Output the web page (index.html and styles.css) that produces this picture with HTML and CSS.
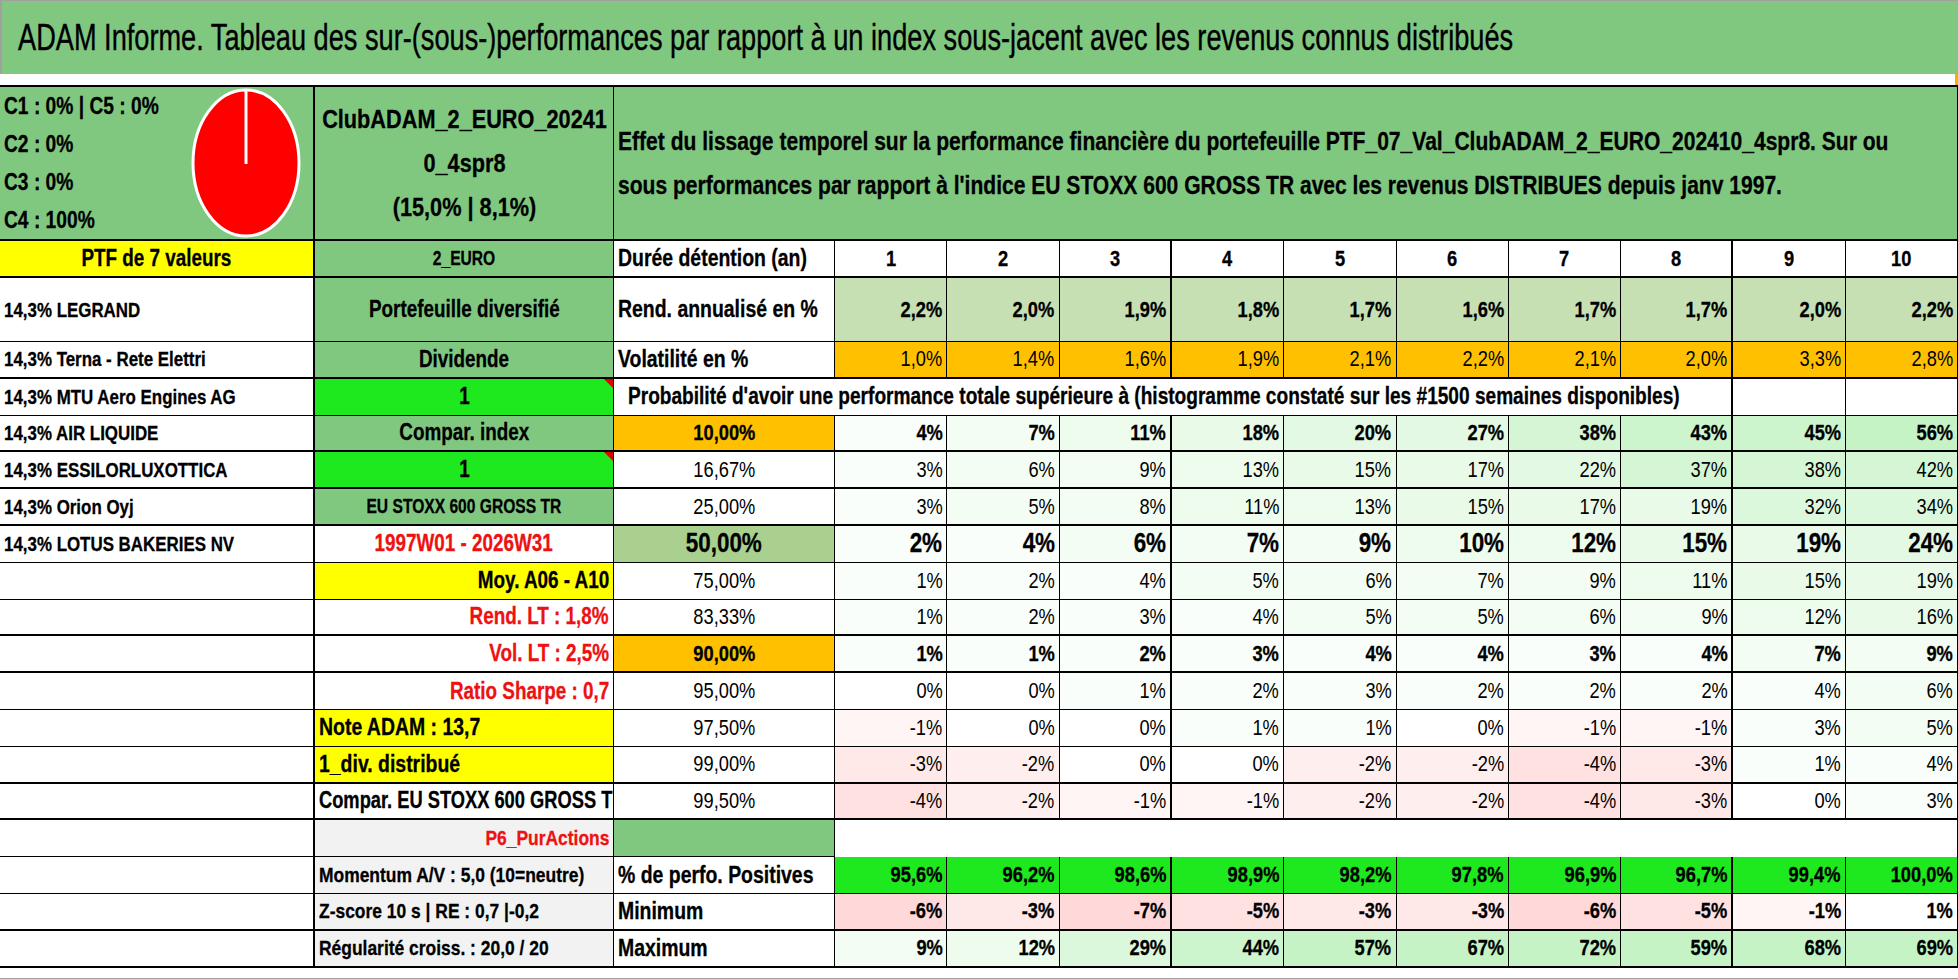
FILE: index.html
```html
<!DOCTYPE html>
<html lang="fr">
<head>
<meta charset="utf-8">
<title>ADAM Informe</title>
<link rel="stylesheet" href="styles.css">
</head>
<body>
<div class="sheet">
  <div class="title"><span>ADAM Informe. Tableau des sur-(sous-)performances par rapport à un index sous-jacent avec les revenus connus distribués</span></div>
  <div class="gap"></div>
  <div class="grid">
    <!-- row 1 -->
    <div class="c gr tr tb piecell">
      <span class="legend">C1 : 0% | C5 : 0%<br>C2 : 0%<br>C3 : 0%<br>C4 : 100%</span>
      <svg class="pie" viewBox="0 0 110 150" width="110" height="150" preserveAspectRatio="none">
        <ellipse cx="55" cy="75" rx="53" ry="73" fill="#ff0000" stroke="#ffffff" stroke-width="3"/>
        <line x1="55" y1="3" x2="55" y2="76" stroke="#ffffff" stroke-width="3"/>
      </svg>
    </div>
    <div class="c gr ctr tb club"><span>ClubADAM_2_EURO_20241<br>0_4spr8<br>(15,0% | 8,1%)</span></div>
    <div class="c gr tb effet span11"><span>Effet du lissage temporel sur la performance financière du portefeuille PTF_07_Val_ClubADAM_2_EURO_202410_4spr8. Sur ou<br>sous performances par rapport à l'indice EU STOXX 600 GROSS TR avec les revenus DISTRIBUES depuis janv 1997.</span></div>

    <!-- row 2 -->
    <div class="c ye ctr tr tb"><span>PTF de 7 valeurs</span></div>
    <div class="c gr ctr tb small"><span>2_EURO</span></div>
    <div class="c lab tb"><span>Durée détention (an)</span></div>
    <div class="c v ctr tb"><span>1</span></div><div class="c v ctr tb"><span>2</span></div><div class="c v ctr tb tr"><span>3</span></div><div class="c v ctr tb"><span>4</span></div><div class="c v ctr tb"><span>5</span></div><div class="c v ctr tb"><span>6</span></div><div class="c v ctr tb"><span>7</span></div><div class="c v ctr tb tr"><span>8</span></div><div class="c v ctr tb"><span>9</span></div><div class="c v ctr tb"><span>10</span></div>

    <!-- row 3 -->
    <div class="c ca tr"><span>14,3% LEGRAND</span></div>
    <div class="c gr ctr"><span>Portefeuille diversifié</span></div>
    <div class="c lab"><span>Rend. annualisé en %</span></div>
    <div class="c v r lg"><span>2,2%</span></div><div class="c v r lg"><span>2,0%</span></div><div class="c v r lg tr"><span>1,9%</span></div><div class="c v r lg"><span>1,8%</span></div><div class="c v r lg"><span>1,7%</span></div><div class="c v r lg"><span>1,6%</span></div><div class="c v r lg"><span>1,7%</span></div><div class="c v r lg tr"><span>1,7%</span></div><div class="c v r lg"><span>2,0%</span></div><div class="c v r lg"><span>2,2%</span></div>

    <!-- row 4 -->
    <div class="c ca tr tb"><span>14,3% Terna - Rete Elettri</span></div>
    <div class="c gr ctr tb"><span>Dividende</span></div>
    <div class="c lab tb"><span>Volatilité en %</span></div>
    <div class="c v r or reg tb"><span>1,0%</span></div><div class="c v r or reg tb"><span>1,4%</span></div><div class="c v r or reg tb tr"><span>1,6%</span></div><div class="c v r or reg tb"><span>1,9%</span></div><div class="c v r or reg tb"><span>2,1%</span></div><div class="c v r or reg tb"><span>2,2%</span></div><div class="c v r or reg tb"><span>2,1%</span></div><div class="c v r or reg tb tr"><span>2,0%</span></div><div class="c v r or reg tb"><span>3,3%</span></div><div class="c v r or reg tb"><span>2,8%</span></div>

    <!-- row 5 -->
    <div class="c ca tr"><span>14,3% MTU Aero Engines AG</span></div>
    <div class="c bg ctr flag"><span>1</span></div>
    <div class="c span9 tr proba"><span>Probabilité d'avoir une performance totale supérieure à (histogramme constaté sur les #1500 semaines disponibles)</span></div>
    <div class="c"></div><div class="c"></div>

    <!-- row 6 -->
    <div class="c ca tr tb"><span>14,3% AIR LIQUIDE</span></div>
    <div class="c gr ctr tb"><span>Compar. index</span></div>
    <div class="c v or ctr tb"><span>10,00%</span></div>
    <div class="c v r tb p1"><span>4%</span></div><div class="c v r tb p2"><span>7%</span></div><div class="c v r tb tr p3"><span>11%</span></div><div class="c v r tb p4"><span>18%</span></div><div class="c v r tb p5"><span>20%</span></div><div class="c v r tb p5"><span>27%</span></div><div class="c v r tb p7"><span>38%</span></div><div class="c v r tb tr p8"><span>43%</span></div><div class="c v r tb p8"><span>45%</span></div><div class="c v r tb p9"><span>56%</span></div>

    <!-- row 7 -->
    <div class="c ca tr tb"><span>14,3% ESSILORLUXOTTICA</span></div>
    <div class="c bg ctr tb flag"><span>1</span></div>
    <div class="c v ctr reg tb"><span>16,67%</span></div>
    <div class="c v r reg tb p1"><span>3%</span></div><div class="c v r reg tb p2"><span>6%</span></div><div class="c v r reg tb tr p2"><span>9%</span></div><div class="c v r reg tb p3"><span>13%</span></div><div class="c v r reg tb p4"><span>15%</span></div><div class="c v r reg tb p4"><span>17%</span></div><div class="c v r reg tb p5"><span>22%</span></div><div class="c v r reg tb tr p7"><span>37%</span></div><div class="c v r reg tb p7"><span>38%</span></div><div class="c v r reg tb p7"><span>42%</span></div>

    <!-- row 8 -->
    <div class="c ca tr tb"><span>14,3% Orion Oyj</span></div>
    <div class="c gr ctr tb small"><span>EU STOXX 600 GROSS TR</span></div>
    <div class="c v ctr reg tb"><span>25,00%</span></div>
    <div class="c v r reg tb p1"><span>3%</span></div><div class="c v r reg tb p2"><span>5%</span></div><div class="c v r reg tb tr p2"><span>8%</span></div><div class="c v r reg tb p3"><span>11%</span></div><div class="c v r reg tb p3"><span>13%</span></div><div class="c v r reg tb p4"><span>15%</span></div><div class="c v r reg tb p4"><span>17%</span></div><div class="c v r reg tb tr p4"><span>19%</span></div><div class="c v r reg tb p6"><span>32%</span></div><div class="c v r reg tb p6"><span>34%</span></div>

    <!-- row 9 -->
    <div class="c ca tr"><span>14,3% LOTUS BAKERIES NV</span></div>
    <div class="c ctr red"><span>1997W01 - 2026W31</span></div>
    <div class="c v mg ctr big"><span>50,00%</span></div>
    <div class="c v r big p1"><span>2%</span></div><div class="c v r big p1"><span>4%</span></div><div class="c v r big tr p2"><span>6%</span></div><div class="c v r big p2"><span>7%</span></div><div class="c v r big p2"><span>9%</span></div><div class="c v r big p3"><span>10%</span></div><div class="c v r big p3"><span>12%</span></div><div class="c v r big tr p4"><span>15%</span></div><div class="c v r big p4"><span>19%</span></div><div class="c v r big p5"><span>24%</span></div>

    <!-- row 10 -->
    <div class="c ca tr"></div>
    <div class="c ye r"><span>Moy. A06 - A10</span></div>
    <div class="c v ctr reg"><span>75,00%</span></div>
    <div class="c v r reg p1"><span>1%</span></div><div class="c v r reg p1"><span>2%</span></div><div class="c v r reg tr p1"><span>4%</span></div><div class="c v r reg p2"><span>5%</span></div><div class="c v r reg p2"><span>6%</span></div><div class="c v r reg p2"><span>7%</span></div><div class="c v r reg p2"><span>9%</span></div><div class="c v r reg tr p3"><span>11%</span></div><div class="c v r reg p4"><span>15%</span></div><div class="c v r reg p4"><span>19%</span></div>

    <!-- row 11 -->
    <div class="c ca tr tb"></div>
    <div class="c r red tb"><span>Rend. LT : 1,8%</span></div>
    <div class="c v ctr reg tb"><span>83,33%</span></div>
    <div class="c v r reg tb p1"><span>1%</span></div><div class="c v r reg tb p1"><span>2%</span></div><div class="c v r reg tb tr p1"><span>3%</span></div><div class="c v r reg tb p1"><span>4%</span></div><div class="c v r reg tb p2"><span>5%</span></div><div class="c v r reg tb p2"><span>5%</span></div><div class="c v r reg tb p2"><span>6%</span></div><div class="c v r reg tb tr p2"><span>9%</span></div><div class="c v r reg tb p3"><span>12%</span></div><div class="c v r reg tb p4"><span>16%</span></div>

    <!-- row 12 -->
    <div class="c ca tr tb"></div>
    <div class="c r red tb"><span>Vol. LT : 2,5%</span></div>
    <div class="c v or ctr tb"><span>90,00%</span></div>
    <div class="c v r tb p1"><span>1%</span></div><div class="c v r tb p1"><span>1%</span></div><div class="c v r tb tr p1"><span>2%</span></div><div class="c v r tb p1"><span>3%</span></div><div class="c v r tb p1"><span>4%</span></div><div class="c v r tb p1"><span>4%</span></div><div class="c v r tb p1"><span>3%</span></div><div class="c v r tb tr p1"><span>4%</span></div><div class="c v r tb p2"><span>7%</span></div><div class="c v r tb p2"><span>9%</span></div>

    <!-- row 13 -->
    <div class="c ca tr"></div>
    <div class="c r red"><span>Ratio Sharpe : 0,7</span></div>
    <div class="c v ctr reg"><span>95,00%</span></div>
    <div class="c v r reg"><span>0%</span></div><div class="c v r reg"><span>0%</span></div><div class="c v r reg tr p1"><span>1%</span></div><div class="c v r reg p1"><span>2%</span></div><div class="c v r reg p1"><span>3%</span></div><div class="c v r reg p1"><span>2%</span></div><div class="c v r reg p1"><span>2%</span></div><div class="c v r reg tr p1"><span>2%</span></div><div class="c v r reg p1"><span>4%</span></div><div class="c v r reg p2"><span>6%</span></div>

    <!-- row 14 -->
    <div class="c ca tr"></div>
    <div class="c lab ye"><span>Note ADAM : 13,7</span></div>
    <div class="c v ctr reg"><span>97,50%</span></div>
    <div class="c v r reg n1"><span>-1%</span></div><div class="c v r reg"><span>0%</span></div><div class="c v r reg tr"><span>0%</span></div><div class="c v r reg p1"><span>1%</span></div><div class="c v r reg p1"><span>1%</span></div><div class="c v r reg"><span>0%</span></div><div class="c v r reg n1"><span>-1%</span></div><div class="c v r reg tr n1"><span>-1%</span></div><div class="c v r reg p1"><span>3%</span></div><div class="c v r reg p2"><span>5%</span></div>

    <!-- row 15 -->
    <div class="c ca tr tb"></div>
    <div class="c lab ye tb"><span>1_div. distribué</span></div>
    <div class="c v ctr reg tb"><span>99,00%</span></div>
    <div class="c v r reg tb n3"><span>-3%</span></div><div class="c v r reg tb n2"><span>-2%</span></div><div class="c v r reg tb tr"><span>0%</span></div><div class="c v r reg tb"><span>0%</span></div><div class="c v r reg tb n2"><span>-2%</span></div><div class="c v r reg tb n2"><span>-2%</span></div><div class="c v r reg tb n4"><span>-4%</span></div><div class="c v r reg tb tr n3"><span>-3%</span></div><div class="c v r reg tb p1"><span>1%</span></div><div class="c v r reg tb p1"><span>4%</span></div>

    <!-- row 16 -->
    <div class="c ca tr tb"></div>
    <div class="c cmp tb"><span>Compar. EU STOXX 600 GROSS TR</span></div>
    <div class="c v ctr reg tb"><span>99,50%</span></div>
    <div class="c v r reg tb n4"><span>-4%</span></div><div class="c v r reg tb n2"><span>-2%</span></div><div class="c v r reg tb tr n1"><span>-1%</span></div><div class="c v r reg tb n1"><span>-1%</span></div><div class="c v r reg tb n2"><span>-2%</span></div><div class="c v r reg tb n2"><span>-2%</span></div><div class="c v r reg tb n4"><span>-4%</span></div><div class="c v r reg tb tr n3"><span>-3%</span></div><div class="c v r reg tb"><span>0%</span></div><div class="c v r reg tb p1"><span>3%</span></div>

    <!-- row 17 -->
    <div class="c ca tr"></div>
    <div class="c gy r red"><span>P6_PurActions</span></div>
    <div class="c gr"></div>
    <div class="c span10 blank"></div>

    <!-- row 18 -->
    <div class="c ca tr"></div>
    <div class="c gy"><span>Momentum A/V : 5,0 (10=neutre)</span></div>
    <div class="c lab"><span>% de perfo. Positives</span></div>
    <div class="c v r bg"><span>95,6%</span></div><div class="c v r bg"><span>96,2%</span></div><div class="c v r bg tr"><span>98,6%</span></div><div class="c v r bg"><span>98,9%</span></div><div class="c v r bg"><span>98,2%</span></div><div class="c v r bg"><span>97,8%</span></div><div class="c v r bg"><span>96,9%</span></div><div class="c v r bg tr"><span>96,7%</span></div><div class="c v r bg"><span>99,4%</span></div><div class="c v r bg"><span>100,0%</span></div>

    <!-- row 19 -->
    <div class="c ca tr tb"></div>
    <div class="c gy tb"><span>Z-score 10 s | RE : 0,7 |-0,2</span></div>
    <div class="c lab tb"><span>Minimum</span></div>
    <div class="c v r tb n5"><span>-6%</span></div><div class="c v r tb n3"><span>-3%</span></div><div class="c v r tb tr n5"><span>-7%</span></div><div class="c v r tb n4"><span>-5%</span></div><div class="c v r tb n3"><span>-3%</span></div><div class="c v r tb n3"><span>-3%</span></div><div class="c v r tb n5"><span>-6%</span></div><div class="c v r tb tr n4"><span>-5%</span></div><div class="c v r tb n1"><span>-1%</span></div><div class="c v r tb"><span>1%</span></div>

    <!-- row 20 -->
    <div class="c ca tr tb"></div>
    <div class="c gy tb"><span>Régularité croiss. : 20,0 / 20</span></div>
    <div class="c lab tb"><span>Maximum</span></div>
    <div class="c v r tb p2"><span>9%</span></div><div class="c v r tb p3"><span>12%</span></div><div class="c v r tb tr p6"><span>29%</span></div><div class="c v r tb p8"><span>44%</span></div><div class="c v r tb p9"><span>57%</span></div><div class="c v r tb p9"><span>67%</span></div><div class="c v r tb p9"><span>72%</span></div><div class="c v r tb tr p9"><span>59%</span></div><div class="c v r tb p9"><span>68%</span></div><div class="c v r tb p9"><span>69%</span></div>
  </div>
</div>
</body>
</html>
```

FILE: styles.css
```css
* { box-sizing: border-box; }

body {
  margin: 0;
  background: #ffffff;
  color: #000000;
  font-family: "Liberation Sans", Arial, sans-serif;
}

.sheet {
  width: 1958px;
  height: 979px;
  overflow: hidden;
  border-bottom: 1px solid #a0a0a0;
}

/* condensed look of the original sheet: glyphs are narrowed horizontally */
.title > span,
.c > span {
  display: inline-block;
  flex: none;
  transform: scaleX(var(--sx, 0.82));
  transform-origin: left center;
}

.title {
  height: 74px;
  background: #80c880;
  border-top: 1px solid #a0a0a0;
  border-left: 2px solid #a0a0a0;
  padding-left: 16px;
  display: flex;
  align-items: center;
  font-size: 36px;
  white-space: nowrap;
  overflow: hidden;
  -webkit-text-stroke: 0.4px #000000;
  --sx: 0.755;
}

.gap {
  height: 11px;
  border-right: 3px solid #f0b400;
}

.grid {
  display: grid;
  grid-template-columns: 315px 299px 221px repeat(10, 1fr);
  grid-template-rows: 154px 37px 64px repeat(17, 36.8px);
  border-top: 2px solid #000000;
}

.c {
  display: flex;
  align-items: center;
  min-width: 0;
  overflow: hidden;
  white-space: nowrap;
  padding: 0 4px;
  border-right: 1px solid #000000;
  border-bottom: 1px solid #000000;
  background: #ffffff;
  font-size: 23px;
  font-weight: 700;
  -webkit-text-stroke: 0.3px currentColor;
  --sx: 0.82;
}

.ctr { justify-content: center; text-align: center; }
.ctr > span { transform-origin: center center; }
.r { justify-content: flex-end; }
.r > span { transform-origin: right center; }

/* text groups */
.ca { font-size: 21px; --sx: 0.805; }
.lab { font-size: 23px; --sx: 0.845; }
.cmp { font-size: 23px; --sx: 0.795; }
.v { font-size: 22px; --sx: 0.83; }
.gy { font-size: 21px; --sx: 0.83; }
.small { font-size: 20px; --sx: 0.78; }
.big { font-size: 27px; }
.reg { font-weight: 400; -webkit-text-stroke: 0; }
.red { color: #ee1111; }

.tb { border-bottom-width: 2px; }
.tr { border-right-width: 2px; }

.span9 { grid-column: span 9; }
.span10 { grid-column: span 10; }
.span11 { grid-column: span 11; }

/* fills */
.gr { background: #80c880; }
.ye { background: #ffff00; }
.or { background: #ffc000; }
.lg { background: #c6e0b4; }
.mg { background: #a9d08e; }
.bg { background: #1ee81e; }
.gy { background: #f2f2f2; }

/* colour scale */
.p1 { background: #fafefa; }
.p2 { background: #f4fdf4; }
.p3 { background: #eefcee; }
.p4 { background: #e9fae9; }
.p5 { background: #e3f9e3; }
.p6 { background: #dcf8dc; }
.p7 { background: #d4f6d4; }
.p8 { background: #cdf5cd; }
.p9 { background: #c5f3c5; }
.n1 { background: #fff5f5; }
.n2 { background: #ffeeee; }
.n3 { background: #ffe8e8; }
.n4 { background: #ffe1e1; }
.n5 { background: #ffd9d9; }

/* header cells */
.piecell {
  justify-content: space-between;
  padding: 0 12px 0 4px;
}

.legend {
  font-size: 23px;
  line-height: 38px;
  --sx: 0.835;
}

.pie { display: block; flex: none; }

.club {
  font-size: 26px;
  line-height: 44px;
  --sx: 0.835;
}

.effet {
  font-size: 25px;
  line-height: 44px;
  --sx: 0.842;
}

.proba { padding-left: 14px; --sx: 0.83; }

.blank { border-bottom: none; }

.flag { position: relative; }
.flag::after {
  content: "";
  position: absolute;
  top: 0;
  right: 0;
  border-top: 9px solid #e00000;
  border-left: 9px solid transparent;
}
```
